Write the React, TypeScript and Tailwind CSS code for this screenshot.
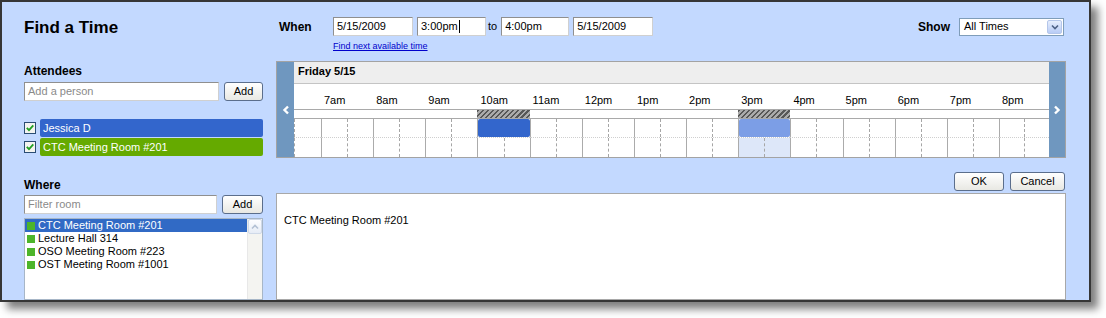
import React from "react";

const hours = ["7am", "8am", "9am", "10am", "11am", "12pm", "1pm", "2pm", "3pm", "4pm", "5pm", "6pm", "7pm", "8pm"];

function Field({ className, children }: { className: string; children?: React.ReactNode }) {
  return (
    <div
      className={
        "h-[19px] bg-white border border-t-[#8f8f8f] border-l-[#8f8f8f] border-r-[#d0d0d0] border-b-[#d0d0d0] flex items-center pl-[3px] text-[11px] leading-[13px] whitespace-nowrap " +
        className
      }
    >
      {children}
    </div>
  );
}

function Btn({ className, children }: { className: string; children?: React.ReactNode }) {
  return (
    <div
      className={
        "h-[19px] flex items-center justify-center rounded-[3px] border border-[#5b6e8c] bg-[linear-gradient(#ffffff,#e8e8e3)] text-[11px] leading-[13px] text-black " +
        className
      }
    >
      {children}
    </div>
  );
}

function Check() {
  return (
    <svg width="12" height="12" viewBox="0 0 12 12" className="shrink-0">
      <rect x="0.5" y="0.5" width="11" height="11" fill="#f4f4f0" stroke="#2b4d73" />
      <path d="M2.8 5.8 L5 8.2 L9.3 3.4" stroke="#22a022" strokeWidth="1.8" fill="none" />
    </svg>
  );
}

function HourCell({ kind, hourIdx }: { kind: "row1" | "row2"; hourIdx: number }) {
  // hourIdx: -1 = first partial column, 0..13 = 7am..8pm
  if (hourIdx === -1) {
    return <div className="h-full border-l border-dashed border-[#a6a6a6]" />;
  }
  const is10 = hourIdx === 3;
  const is3 = hourIdx === 8;
  const last = hourIdx === 13;
  if (kind === "row1" && is10) {
    return (
      <div className="h-full flex border-l border-[#ababab]">
        <div className="flex-1 bg-[#3366cc] rounded-[2px]" />
      </div>
    );
  }
  if (kind === "row1" && is3) {
    return (
      <div className="h-full flex border-l border-[#ababab]">
        <div className="flex-1 bg-[#7c9ee6] rounded-[2px]" />
      </div>
    );
  }
  const pale = kind === "row2" && is3;
  return (
    <div className={"h-full flex border-l border-[#ababab] " + (pale ? "bg-[#dde7f9]" : "")}>
      <div className={(last ? "w-[25px] " : "flex-1 ") + "border-r border-dashed border-[#a6a6a6]"} />
      <div className="flex-1" />
    </div>
  );
}

function Column({ idx }: { idx: number }) {
  const label = idx >= 0 ? hours[idx] : "";
  const hatched = idx === 3 || idx === 8;
  return (
    <div className="flex flex-col min-w-0">
      <div className="h-[26px] border-b border-[#a9a9a9] pt-[10px] pl-[3px] text-[11px] leading-[13px] whitespace-nowrap">
        {label}
      </div>
      <div className="h-[9px] border-b border-[#a9a9a9]">
        {hatched && (
          <div className="h-full bg-[repeating-linear-gradient(135deg,#575757_0px,#575757_1.6px,#ababab_1.6px,#ababab_3.6px)]" />
        )}
      </div>
      <div className="h-[19px] border-b border-dotted border-[#cfcfcf]">
        <HourCell kind="row1" hourIdx={idx} />
      </div>
      <div className="h-[19px]">
        <HourCell kind="row2" hourIdx={idx} />
      </div>
    </div>
  );
}

export default function App() {
  const cols = [-1, 0, 1, 2, 3, 4, 5, 6, 7, 8, 9, 10, 11, 12, 13];
  return (
    <div className="w-[1106px] h-[318px] bg-white font-['Liberation_Sans',Arial,sans-serif] text-black">
      <div className="w-[1091px] h-[302px] border-2 border-[#363636] bg-[#c3d9ff] overflow-hidden shadow-[7px_7px_8px_rgba(0,0,0,0.5)] flex gap-[13px] pl-[22px] pt-[15px]">
        {/* Left column */}
        <div className="w-[239px] shrink-0 flex flex-col">
          <div className="mt-[1px] h-[20px] leading-[20px] text-[17px] font-bold">Find a Time</div>
          <div className="mt-[26px] h-[14px] leading-[14px] text-[12px] font-bold">Attendees</div>
          <div className="mt-[4px] flex items-center gap-[5px] h-[19px]">
            <Field className="w-[195px] h-[18px] text-[#8a8a8a]">Add a person</Field>
            <Btn className="w-[39px]">Add</Btn>
          </div>
          <div className="mt-[18px] flex flex-col gap-[1px]">
            <div className="h-[18px] flex items-center gap-[4px]">
              <Check />
              <div className="flex-1 h-full bg-[#3366cc] rounded-[2px] text-white text-[11px] leading-[18px] pl-[3px]">
                Jessica D
              </div>
            </div>
            <div className="h-[18px] flex items-center gap-[4px]">
              <Check />
              <div className="flex-1 h-full bg-[#65aa00] rounded-[2px] text-white text-[11px] leading-[18px] pl-[3px]">
                CTC Meeting Room #201
              </div>
            </div>
          </div>
          <div className="mt-[22px] h-[14px] leading-[14px] text-[12px] font-bold">Where</div>
          <div className="mt-[3px] flex items-center gap-[5px] h-[19px]">
            <Field className="flex-1 text-[#8a8a8a]">Filter room</Field>
            <Btn className="w-[41px]">Add</Btn>
          </div>
          <div className="mt-[4px] h-[100px] border border-[#a7b6c7] bg-white flex">
            <div className="flex-1 flex flex-col">
              {["CTC Meeting Room #201", "Lecture Hall 314", "OSO Meeting Room #223", "OST Meeting Room #1001"].map(
                (r, i) => (
                  <div
                    key={r}
                    className={
                      "h-[13px] flex items-center gap-[3px] pl-[2px] text-[11px] leading-[13px] whitespace-nowrap " +
                      (i === 0 ? "bg-[#316ac5] text-white" : "text-black")
                    }
                  >
                    <span className="w-[8px] h-[8px] bg-[#4db52a] shrink-0" />
                    {r}
                  </div>
                )
              )}
            </div>
            <div className="w-[15px] bg-[#f4f4f1] border-l border-[#e8e8e8] flex flex-col">
              <div className="h-[15px] border border-[#cfd9e8] rounded-[2px] bg-[linear-gradient(#fdfdff,#e6ecf6)] flex items-center justify-center">
                <svg width="8" height="6" viewBox="0 0 8 6">
                  <polyline points="1,4.5 4,1.5 7,4.5" stroke="#b3c0d4" strokeWidth="1.6" fill="none" />
                </svg>
              </div>
            </div>
          </div>
        </div>

        {/* Right column */}
        <div className="w-[790px] shrink-0 flex flex-col">
          <div className="flex items-center h-[19px]">
            <div className="w-[54px] ml-[3px] text-[12px] leading-[14px] font-bold">When</div>
            <Field className="w-[80px]">5/15/2009</Field>
            <Field className="ml-[4px] w-[69px]">
              3:00pm
              <span className="inline-block w-px h-[13px] bg-black ml-[1px]" />
            </Field>
            <span className="ml-[2px] mr-[4px] text-[11px] leading-[13px]">to</span>
            <Field className="w-[68px]">4:00pm</Field>
            <Field className="ml-[4px] w-[80px]">5/15/2009</Field>
            <div className="ml-auto mr-[2px] flex items-center gap-[9px]">
              <span className="text-[12px] leading-[14px] font-bold">Show</span>
              <div className="w-[105px] h-[18px] border border-[#7f9db9] bg-white flex items-center">
                <span className="flex-1 pl-[4px] text-[11px] leading-[13px]">All Times</span>
                <div className="w-[15px] h-[14px] mr-[1px] rounded-[2px] border border-[#b4c6ea] bg-[linear-gradient(#e6eefd,#b8ccf6)] flex items-center justify-center">
                  <svg width="8" height="6" viewBox="0 0 8 6">
                    <polyline points="1,1.5 4,4.5 7,1.5" stroke="#4d6185" strokeWidth="1.6" fill="none" />
                  </svg>
                </div>
              </div>
            </div>
          </div>
          <div className="mt-[5px] pl-[57px] h-[11px] leading-[11px] text-[9px] text-[#0000cc] underline">
            Find next available time
          </div>

          {/* Calendar */}
          <div className="mt-[9px] h-[97px] border border-[#a3a3a3] flex">
            <div className="w-[17px] shrink-0 bg-[#6f97bf] flex items-center justify-center">
              <svg width="8" height="10" viewBox="0 0 8 10">
                <polyline points="6,1.5 2.5,5 6,8.5" stroke="#ffffff" strokeWidth="2.4" fill="none" />
              </svg>
            </div>
            <div className="w-[755px] shrink-0 flex flex-col bg-white">
              <div className="h-[22px] bg-[#eeeeee] border-b border-[#c4c4c4] pl-[4px] pt-[3px] text-[11px] leading-[13px] font-bold">
                Friday 5/15
              </div>
              <div className="grid grid-cols-[27px_repeat(13,minmax(0,1fr))_50px]">
                {cols.map((c) => (
                  <Column key={c} idx={c} />
                ))}
              </div>
            </div>
            <div className="flex-1 bg-[#6f97bf] flex items-center justify-center">
              <svg width="8" height="10" viewBox="0 0 8 10">
                <polyline points="2,1.5 5.5,5 2,8.5" stroke="#ffffff" strokeWidth="2.4" fill="none" />
              </svg>
            </div>
          </div>

          <div className="mt-[14px] flex justify-end gap-[6px] pr-[1px]">
            <Btn className="w-[50px]">OK</Btn>
            <Btn className="w-[55px]">Cancel</Btn>
          </div>
          <div className="mt-[2px] h-[120px] border border-[#a8a8a8] bg-white pl-[7px] pt-[20px] text-[11px] leading-[13px]">
            CTC Meeting Room #201
          </div>
        </div>
      </div>
    </div>
  );
}
